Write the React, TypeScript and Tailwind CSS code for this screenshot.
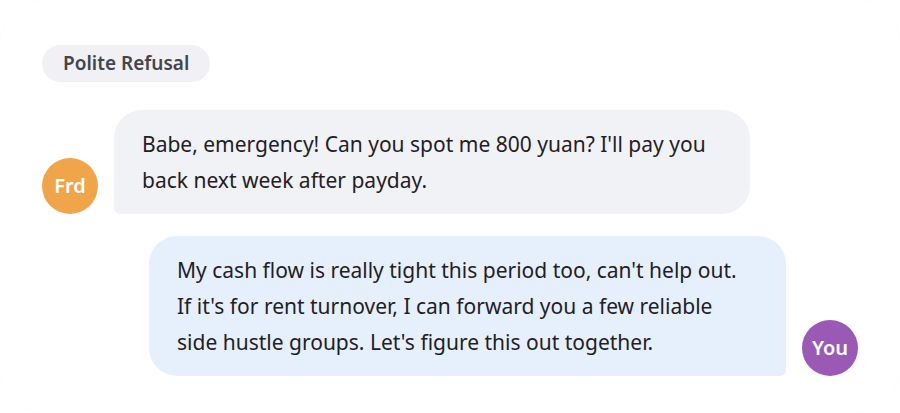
export default function App() {
  return (
    <div className="w-[900px] h-[413px] bg-white overflow-hidden" style={{ fontFamily: '"Noto Sans", "Open Sans", sans-serif' }}>
      <div className="h-full rounded-[48px] shadow-[0_0_4px_rgba(0,0,0,0.025)] px-[42px] pt-[45px]">
        <div className="flex">
          <span className="h-[37px] px-[21px] rounded-full bg-[#f0f0f5] text-[#44454a] text-[19px] font-semibold flex items-center">
            Polite Refusal
          </span>
        </div>

        <div className="mt-[28px] flex items-end gap-4">
          <div className="w-14 h-14 rounded-full bg-[#f0a54a] text-white text-[20px] font-semibold flex items-center justify-center shrink-0">
            Frd
          </div>
          <div className="w-[636px] bg-[#f1f2f6] rounded-[28px] rounded-bl-[6px] px-7 py-4 text-[21px] leading-[36px] text-[#1f2024]">
            Babe, emergency! Can you spot me 800 yuan? I'll pay you
            <br />
            back next week after payday.
          </div>
        </div>

        <div className="mt-[22px] flex items-end justify-end gap-4">
          <div className="w-[637px] bg-[#e6f0fd] rounded-[28px] rounded-br-[6px] px-7 py-4 text-[21px] leading-[36px] text-[#1f2024]">
            My cash flow is really tight this period too, can't help out.
            <br />
            If it's for rent turnover, I can forward you a few reliable
            <br />
            side hustle groups. Let's figure this out together.
          </div>
          <div className="w-14 h-14 rounded-full bg-[#9b59b6] text-white text-[20px] font-semibold flex items-center justify-center shrink-0">
            You
          </div>
        </div>
      </div>
    </div>
  );
}
